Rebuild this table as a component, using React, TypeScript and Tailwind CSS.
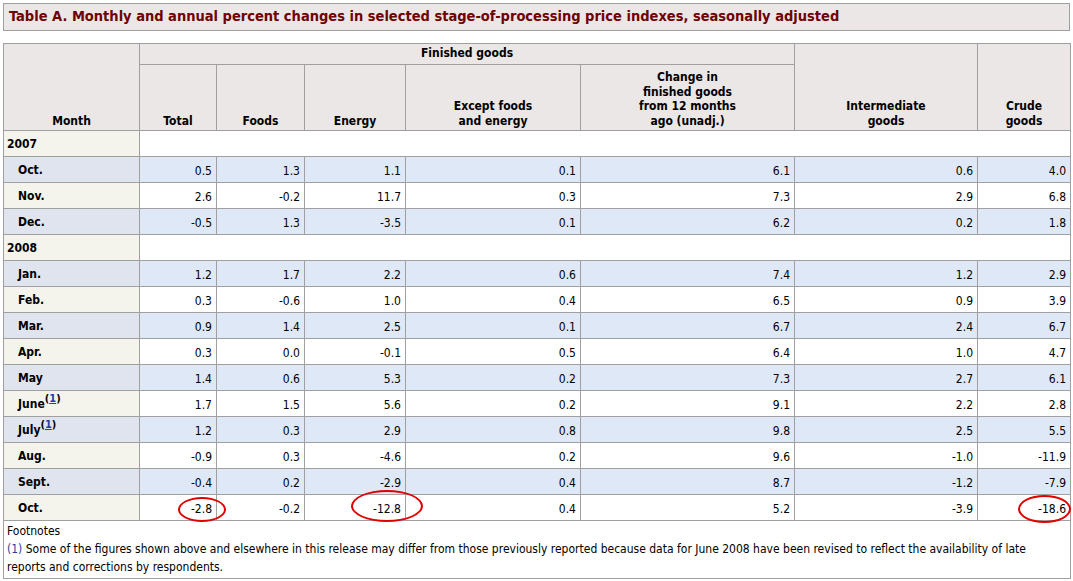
import React from 'react';

type Row = { month: string; note?: boolean; values: string[] };
type Year = { year: string; rows: Row[] };

const data: Year[] = [
    {
        year: '2007',
        rows: [
            { month: 'Oct.', values: ['0.5', '1.3', '1.1', '0.1', '6.1', '0.6', '4.0'] },
            { month: 'Nov.', values: ['2.6', '-0.2', '11.7', '0.3', '7.3', '2.9', '6.8'] },
            { month: 'Dec.', values: ['-0.5', '1.3', '-3.5', '0.1', '6.2', '0.2', '1.8'] },
        ],
    },
    {
        year: '2008',
        rows: [
            { month: 'Jan.', values: ['1.2', '1.7', '2.2', '0.6', '7.4', '1.2', '2.9'] },
            { month: 'Feb.', values: ['0.3', '-0.6', '1.0', '0.4', '6.5', '0.9', '3.9'] },
            { month: 'Mar.', values: ['0.9', '1.4', '2.5', '0.1', '6.7', '2.4', '6.7'] },
            { month: 'Apr.', values: ['0.3', '0.0', '-0.1', '0.5', '6.4', '1.0', '4.7'] },
            { month: 'May', values: ['1.4', '0.6', '5.3', '0.2', '7.3', '2.7', '6.1'] },
            { month: 'June', note: true, values: ['1.7', '1.5', '5.6', '0.2', '9.1', '2.2', '2.8'] },
            { month: 'July', note: true, values: ['1.2', '0.3', '2.9', '0.8', '9.8', '2.5', '5.5'] },
            { month: 'Aug.', values: ['-0.9', '0.3', '-4.6', '0.2', '9.6', '-1.0', '-11.9'] },
            { month: 'Sept.', values: ['-0.4', '0.2', '-2.9', '0.4', '8.7', '-1.2', '-7.9'] },
            { month: 'Oct.', values: ['-2.8', '-0.2', '-12.8', '0.4', '5.2', '-3.9', '-18.6'] },
        ],
    },
];

const font = { fontFamily: '"DejaVu Sans Condensed", "DejaVu Sans", Tahoma, sans-serif' };

const th = 'border border-[#a0a0a0] bg-[#ebe7e7] font-bold text-center align-bottom px-1 pb-[2px] leading-[14.5px]';

export default function App() {
    return (
        <div className="relative w-[1073px] h-[581px] bg-white text-black text-[12px]" style={font}>
            {/* Title bar */}
            <div className="absolute left-[3px] top-[3px] w-[1067px]">
                <div className="h-[28px] border border-[#a0a0a0] bg-[#ebe7e7] px-[5px] flex items-center text-[14.5px] font-bold text-[#6e0000]">
                    Table A. Monthly and annual percent changes in selected stage-of-processing price indexes, seasonally adjusted
                </div>

                <table className="mt-[12px] w-[1067px] table-fixed border-collapse">
                    <colgroup>
                        <col className="w-[136px]" />
                        <col className="w-[77px]" />
                        <col className="w-[88px]" />
                        <col className="w-[101px]" />
                        <col className="w-[175px]" />
                        <col className="w-[214px]" />
                        <col className="w-[183px]" />
                        <col className="w-[93px]" />
                    </colgroup>
                    <thead>
                        <tr className="h-[21px]">
                            <th rowSpan={2} className={th}>Month</th>
                            <th colSpan={5} className={th + ' !align-middle'}>Finished goods</th>
                            <th rowSpan={2} className={th}>Intermediate<br />goods</th>
                            <th rowSpan={2} className={th}>Crude<br />goods</th>
                        </tr>
                        <tr className="h-[66px]">
                            <th className={th}>Total</th>
                            <th className={th}>Foods</th>
                            <th className={th}>Energy</th>
                            <th className={th}>Except foods<br />and energy</th>
                            <th className={th}>Change in<br />finished goods<br />from 12 months<br />ago (unadj.)</th>
                        </tr>
                    </thead>
                    <tbody>
                        {data.map((y) => (
                            <React.Fragment key={y.year}>
                                <tr className="h-[26px]">
                                    <td className="border border-[#a0a0a0] bg-[#f5f4ec] font-bold px-[3px]">{y.year}</td>
                                    <td colSpan={7} className="border border-[#a0a0a0] bg-white" />
                                </tr>
                                {y.rows.map((r, i) => {
                                    const striped = i % 2 === 0;
                                    return (
                                        <tr key={r.month + i} className="h-[26px]">
                                            <td
                                                className={
                                                    'border border-[#a0a0a0] font-bold pl-[14px] ' +
                                                    (striped ? 'bg-[#e0e4ef]' : 'bg-[#f5f4ec]')
                                                }
                                            >
                                                {r.month}
                                                {r.note && (
                                                    <sup className="font-bold text-[11px]">
                                                        (<span className="text-[#1a3fb0] underline">1</span>)
                                                    </sup>
                                                )}
                                            </td>
                                            {r.values.map((v, j) => (
                                                <td
                                                    key={j}
                                                    className={
                                                        'border border-[#a0a0a0] text-right pr-[4px] pt-[2px] ' +
                                                        (striped ? 'bg-[#dfe8f7]' : 'bg-white')
                                                    }
                                                >
                                                    {v}
                                                </td>
                                            ))}
                                        </tr>
                                    );
                                })}
                            </React.Fragment>
                        ))}
                        <tr>
                            <td colSpan={8} className="border border-[#a0a0a0] bg-white px-[3px] pt-[1px] pb-[2px] text-[12px] leading-[18px]">
                                <div>Footnotes</div>
                                <p>
                                    <span className="text-[#2a3f9a]">(1)</span> Some of the figures shown above and elsewhere in this release may differ from those previously reported because data for June 2008 have been revised to reflect the availability of late reports and corrections by respondents.
                                </p>
                            </td>
                        </tr>
                    </tbody>
                </table>
            </div>

            {/* Red highlight ellipses drawn over the October 2008 figures */}
            <div className="absolute left-[178px] top-[497px] w-[48px] h-[25px] rounded-[50%] border-2 border-[#e00000]" />
            <div className="absolute left-[351px] top-[490px] w-[72px] h-[32px] rounded-[50%] border-2 border-[#e00000]" />
            <div className="absolute left-[1018px] top-[495px] w-[53px] h-[28px] rounded-[50%] border-2 border-[#e00000]" />
        </div>
    );
}
